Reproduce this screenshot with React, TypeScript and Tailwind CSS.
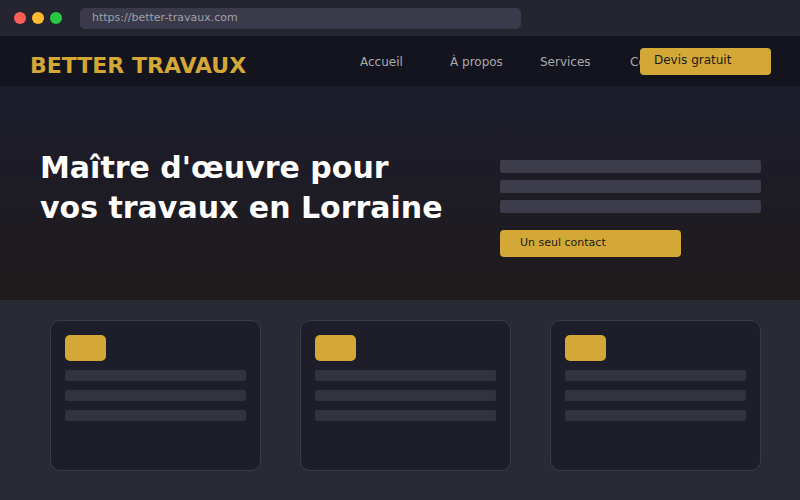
// Better Travaux landing page mockup inside a dark browser frame.

const NAV_LINKS = ["Accueil", "À propos", "Services", "Contact"];
const DOTS = ["bg-[#ff5f57]", "bg-[#ffbd2e]", "bg-[#28c940]"];

function Card() {
  return (
    <div className="h-[151px] w-[211px] rounded-[10px] border border-[#3a3a4a] bg-[#1e1e2a] px-[14px] pt-[14px]">
      <div className="mb-[9px] h-[26px] w-[41px] rounded-[5px] bg-[#d4a837]" />
      <div className="flex w-[181px] flex-col gap-[9px]">
        <div className="h-[11px] rounded-[2px] bg-[#333340]" />
        <div className="h-[11px] rounded-[2px] bg-[#333340]" />
        <div className="h-[11px] rounded-[2px] bg-[#333340]" />
      </div>
    </div>
  );
}

export default function App() {
  return (
    <div className="flex h-[500px] w-[800px] flex-col overflow-hidden bg-[#2a2a35] font-['DejaVu_Sans',sans-serif]">
      <div className="flex h-[36px] items-center bg-[#252530] pl-[14px]">
        <div className="flex gap-[6px]">
          {DOTS.map((c) => (
            <div key={c} className={`h-[12px] w-[12px] rounded-full ${c}`} />
          ))}
        </div>
        <div className="ml-[18px] flex h-[21px] w-[441px] items-center rounded-[5px] bg-[#3a3a4a] pl-[12px] text-[11px] text-[#a0a0aa]">
          https://better-travaux.com
        </div>
      </div>

      <div className="relative flex h-[50px] items-center bg-[#14141f] pl-[30px]">
        <span className="mt-[8px] text-[22px] font-bold text-[#d4a837]">BETTER TRAVAUX</span>
        <nav className="ml-auto mr-[90px] mt-[2px] grid grid-cols-[90px_90px_90px_80px] text-[12px] text-[#aaaaaa]">
          {NAV_LINKS.map((l) => (
            <span key={l}>{l}</span>
          ))}
        </nav>
        <div className="absolute left-[640px] top-[12px] h-[27px] w-[131px] rounded-[4px] bg-[#d4a837] pl-[14px] pt-[3px] text-[12px] text-[#1a1a1a]">
          Devis gratuit
        </div>
      </div>

      <div className="flex h-[214px] items-start bg-gradient-to-b from-[#1c1c2c] to-[#1f1b1c] pl-[40px]">
        <h1 className="mt-[62px] w-[460px] text-[30px] leading-[40px] font-bold text-white">
          Maître d'œuvre pour
          <br />
          vos travaux en Lorraine
        </h1>
        <div className="mt-[74px] w-[261px]">
          <div className="flex flex-col gap-[7px]">
            <div className="h-[13px] rounded-[2px] bg-[#3c3c4a]" />
            <div className="h-[13px] rounded-[2px] bg-[#3c3c4a]" />
            <div className="h-[13px] rounded-[2px] bg-[#3c3c4a]" />
          </div>
          <div className="mt-[17px] flex h-[27px] w-[181px] items-center rounded-[4px] bg-[#d4a837] pl-[20px] text-[11px] text-[#1a1a1a]">
            Un seul contact
          </div>
        </div>
      </div>

      <div className="flex gap-[39px] pl-[50px] pt-[20px]">
        <Card />
        <Card />
        <Card />
      </div>
    </div>
  );
}
